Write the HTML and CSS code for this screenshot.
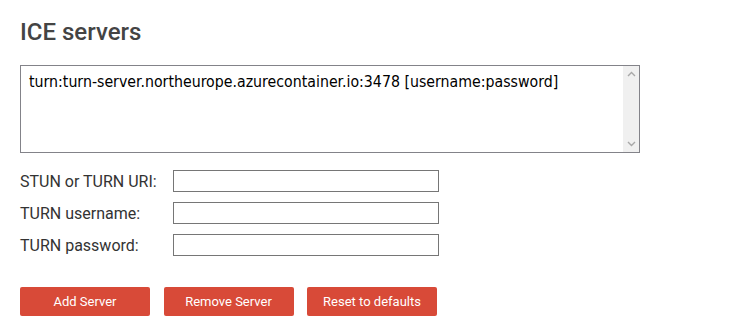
FILE: index.html
```html
<!DOCTYPE html>
<html lang="en">
<head>
  <meta charset="UTF-8">
  <title>Trickle ICE</title>
  <link rel="stylesheet" href="styles.css">
</head>
<body>

<section id="iceServers">
  <h2>ICE servers</h2>

  <div class="server-list">
    <div class="server-options">
      <div class="server-option">turn:turn-server.northeurope.azurecontainer.io:3478 [username:password]</div>
    </div>
    <div class="scrollbar">
      <svg width="9" height="6" viewBox="0 0 9 6"><path d="M1 5 L4.5 1.5 L8 5" fill="none" stroke="#a8a8a8" stroke-width="1.4"/></svg>
      <svg width="9" height="6" viewBox="0 0 9 6"><path d="M1 1 L4.5 4.5 L8 1" fill="none" stroke="#a8a8a8" stroke-width="1.4"/></svg>
    </div>
  </div>

  <div class="field-row">
    <label for="url">STUN or TURN URI:</label>
    <input id="url">
  </div>
  <div class="field-row">
    <label for="username">TURN username:</label>
    <input id="username">
  </div>
  <div class="field-row">
    <label for="password">TURN password:</label>
    <input id="password">
  </div>

  <div class="buttons">
    <button id="add">Add Server</button>
    <button id="remove">Remove Server</button>
    <button id="reset">Reset to defaults</button>
  </div>
</section>

</body>
</html>
```

FILE: styles.css
```css
body { font-family: Roboto, sans-serif; color: #444; background: #fff; margin: 0; padding: 0 20px; }
h2 { font-size: 24px; font-weight: 500; line-height: 28px; margin: 18px 0 19px; color: #444; }
.server-list { display: flex; width: 620px; height: 88px; box-sizing: border-box; border: 1px solid #838389; background: #fff; }
.server-options { flex: 1; padding: 6px 8px; font-family: 'DejaVu Sans Condensed', 'DejaVu Sans', sans-serif; font-stretch: condensed; font-size: 15.75px; color: #000; }
.server-option { line-height: 20px; white-space: nowrap; }
.scrollbar { width: 16px; background: #f0f0f0; display: flex; flex-direction: column; justify-content: space-between; align-items: center; padding: 5px 0; }
.field-row { display: flex; align-items: center; height: 22px; margin-top: 17px; }
.field-row + .field-row { margin-top: 10px; }
label { width: 153px; font-size: 16px; color: #333; }
input { width: 266px; height: 22px; box-sizing: border-box; border: 1px solid #767676; padding: 1px 3px; font-size: 13px; }
.buttons { display: flex; gap: 13.5px; margin-top: 31px; }
button { width: 130px; height: 29px; border: none; border-radius: 2px; background: #d84a38; color: #fff; font-family: Roboto, sans-serif; font-size: 13px; padding: 0; }
```
